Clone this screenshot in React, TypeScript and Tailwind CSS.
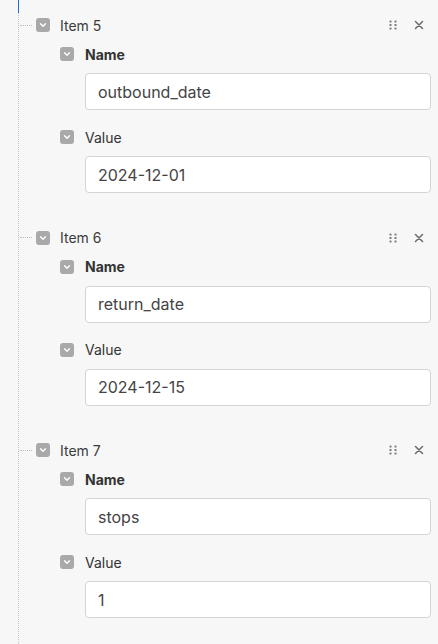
import React from 'react';

type Field = { label: string; value: string; bold?: boolean };
type Item = { title: string; fields: Field[] };

const items: Item[] = [
  { title: 'Item 5', fields: [{ label: 'Name', value: 'outbound_date', bold: true }, { label: 'Value', value: '2024-12-01' }] },
  { title: 'Item 6', fields: [{ label: 'Name', value: 'return_date', bold: true }, { label: 'Value', value: '2024-12-15' }] },
  { title: 'Item 7', fields: [{ label: 'Name', value: 'stops', bold: true }, { label: 'Value', value: '1' }] },
];

function Toggle() {
  return (
    <span className="flex h-[14px] w-[14px] shrink-0 items-center justify-center rounded-[3px] bg-[#a9a9a9]">
      <svg width="8" height="6" viewBox="0 0 8 6" fill="none">
        <path d="M1.5 1.8 4 4.3 6.5 1.8" stroke="white" strokeWidth="1.4" strokeLinecap="round" strokeLinejoin="round" />
      </svg>
    </span>
  );
}

function Grip() {
  return (
    <svg width="8" height="10" viewBox="0 0 8 10" fill="#7a7a7a">
      <rect x="0.5" y="0.5" width="2" height="2" rx="0.5" />
      <rect x="5.5" y="0.5" width="2" height="2" rx="0.5" />
      <rect x="0.5" y="4" width="2" height="2" rx="0.5" />
      <rect x="5.5" y="4" width="2" height="2" rx="0.5" />
      <rect x="0.5" y="7.5" width="2" height="2" rx="0.5" />
      <rect x="5.5" y="7.5" width="2" height="2" rx="0.5" />
    </svg>
  );
}

function Close() {
  return (
    <svg width="10" height="10" viewBox="0 0 10 10" fill="none">
      <path d="M1.5 1.5 8.5 8.5M8.5 1.5 1.5 8.5" stroke="#6a6a6a" strokeWidth="1.5" strokeLinecap="round" />
    </svg>
  );
}

function ItemBlock({ item }: { item: Item }) {
  return (
    <div className="flex flex-col pb-[30.5px]">
      <div className="flex h-[28px] items-center">
        <span className="ml-px w-[12px] border-t border-dotted border-[#bdbdbd]" />
        <span className="ml-[4px]"><Toggle /></span>
        <span className="ml-[10px] text-[14px] text-[#3b3b3b]">{item.title}</span>
        <div className="ml-auto mr-[14px] flex items-center gap-[17px]">
          <Grip />
          <Close />
        </div>
      </div>
      {item.fields.map((f, i) => (
        <div key={f.label} className={i === 0 ? 'mt-px' : 'mt-[13px]'}>
          <div className="flex h-[28px] items-center pl-[41px]">
            <Toggle />
            <span className={`ml-[11px] text-[14px] text-[#333] ${f.bold ? 'font-bold' : ''}`}>{f.label}</span>
          </div>
          <div className="ml-[66px] mr-[7px] mt-[5px] flex h-[37px] items-center rounded-[4px] border border-[#d4d4d4] bg-white pl-[12px] text-[16px] text-[#444]">
            {f.value}
          </div>
        </div>
      ))}
    </div>
  );
}

export default function App() {
  return (
    <div className="h-[644px] w-[438px] overflow-hidden bg-[#f7f7f7]" style={{ fontFamily: 'Inter, "Noto Sans", sans-serif' }}>
      <div className="flex min-h-[700px] pl-[18px]">
        <div className="flex w-px flex-col">
          <div className="h-[13px] bg-[#1a6fd6]" />
          <div className="flex-1 border-l border-dotted border-[#c4c4c4]" />
        </div>
        <div className="flex-1 pt-[11px]">
          {items.map((it) => (
            <ItemBlock key={it.title} item={it} />
          ))}
        </div>
      </div>
    </div>
  );
}
